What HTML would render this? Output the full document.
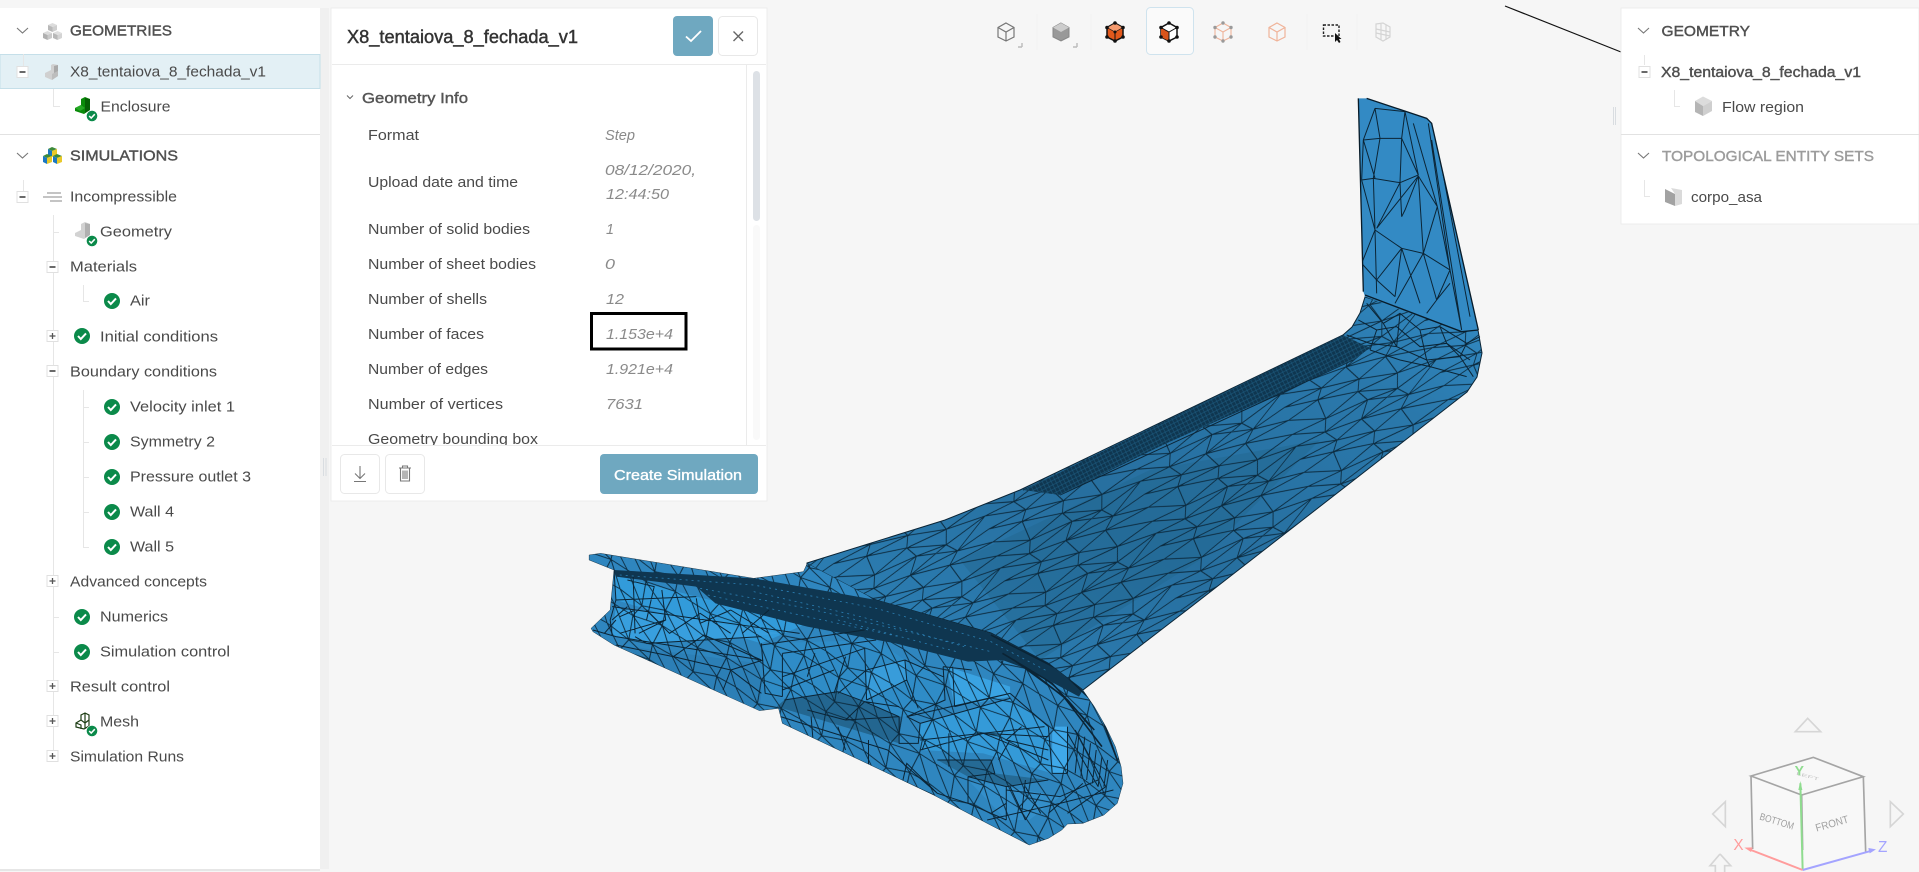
<!DOCTYPE html>
<html lang="en"><head><meta charset="utf-8"><title>X8_tentaiova_8_fechada_v1</title>
<style>
html,body{margin:0;padding:0;background:#f6f6f6;width:1919px;height:872px;overflow:hidden}
svg{display:block}
text{font-family:"Liberation Sans",sans-serif;font-size:14.5px;fill:#4a4a4a}
.h{fill:#505050;stroke:#505050;stroke-width:.4;font-size:14.5px}
.v{font-style:italic;fill:#8a8a8a}
.m{fill:none;stroke:#0b2435;stroke-width:1;vector-effect:non-scaling-stroke}
.t{stroke:#e6e6e6;stroke-width:1;fill:none}
</style></head><body>
<svg xmlns="http://www.w3.org/2000/svg" width="1919" height="872" viewBox="0 0 1919 872">
<defs>
<pattern id="wm" width="140" height="52" patternUnits="userSpaceOnUse" patternTransform="matrix(1 -.62 .3 1 0 0)">
<path d="M0,2L32,6L66,0L104,5L140,2M0,14L28,17L72,12L100,18L140,14M0,27L36,30L62,25L108,29L140,27M0,40L30,38L70,42L98,37L140,40M32,6L28,17M66,0L72,12M104,5L100,18M28,17L36,30M72,12L62,25M100,18L108,29M36,30L30,38M62,25L70,42M108,29L98,37M30,38L32,58M70,42L66,52M98,37L104,57M30,-14L32,6M70,-10L66,0M98,-15L104,5M0,2L28,17M32,6L72,12M66,0L100,18M104,5L140,14M0,14L36,30M28,17L62,25M100,18L62,25M72,12L108,29M140,14L108,29M0,27L30,38M36,30L70,42M62,25L98,37M108,29L140,40M0,40L32,58M30,38L66,52M70,42L104,57M98,37L140,54M0,-12L32,6M30,-14L66,0M70,-10L104,5M98,-15L140,2" fill="none" stroke="#0b2a3e" stroke-width=".85"/>
</pattern>
<pattern id="fm" width="60" height="34" patternUnits="userSpaceOnUse" patternTransform="matrix(2.8 1.6 -1 3 0 0)">
<path d="M0,3L22,8L42,2L60,3M0,18L18,20L44,16L60,18M22,8L18,20M42,2L44,16M0,3L18,20M22,8L44,16M42,2L60,18M18,20L22,42M44,16L42,36M0,18L22,42M18,20L42,36M44,16L60,37M18,-14L22,8M44,-18L42,2M0,-16L22,8M18,-14L42,2M44,-18L60,3" fill="none" stroke="#0b2a3e" stroke-width=".85"/>
</pattern>
<pattern id="fine" width="4" height="4" patternUnits="userSpaceOnUse" patternTransform="rotate(-27)">
<rect width="4" height="4" fill="#0f3650"/><path d="M0,2H4M2,0V4" stroke="#1f5f85" stroke-width=".5"/>
</pattern>
<linearGradient id="wg" x1="0" y1="1" x2="1" y2="0"><stop offset="0" stop-color="#2e84bb"/><stop offset=".45" stop-color="#276f9f"/><stop offset=".8" stop-color="#2a78ab"/><stop offset="1" stop-color="#338bc4"/></linearGradient>
<clipPath id="wc"><polygon points="807,563 945,520 1000,498 1020,490 1343,335 1352,327 1360,313 1365,297 1478,330 1482,353 1477,377 1467,392 1187,610 1170,623 1083,690 1048,663 991,633 876,600 807,570"/></clipPath>
<clipPath id="pc"><rect x="332" y="65" width="414" height="380"/></clipPath>
<clipPath id="wl"><polygon points="1075,25 1100,25 1280,85 1295,100 1435,720 1385,725 1095,620 1090,605"/></clipPath>
<polygon id="fp" points="50,105 80,100 480,175 610,155 620,130 800,240 1100,340 1250,430 1340,510 1370,560 1400,620 1425,680 1440,740 1445,790 1430,850 1395,885 1340,910 1300,912 1285,930 1250,955 1200,975 1090,910 950,825 555,610 545,565 495,572 115,375 60,335 55,325 105,270 115,150 50,120"/>
<clipPath id="fc"><use href="#fp"/></clipPath>
<g id="ok"><circle r="8" fill="#0b8a4a"/><path d="M-4,0L-1.2,3L4,-2.6" fill="none" stroke="#fff" stroke-width="2"/></g>
<g id="oks"><circle r="5.6" fill="#0b8a4a" stroke="#fff" stroke-width=".6"/><path d="M-2.8,0L-.8,2L2.8,-1.8" fill="none" stroke="#fff" stroke-width="1.5"/></g>
<g id="minus"><rect x="-5.5" y="-5.5" width="11" height="11" fill="#fff" stroke="#e0e0e0"/><path d="M-3,0H3" stroke="#444" stroke-width="1.6"/></g>
<g id="plus"><rect x="-5.5" y="-5.5" width="11" height="11" fill="#fff" stroke="#e0e0e0"/><path d="M-3,0H3M0,-3V3" stroke="#555" stroke-width="1.3"/></g>
</defs>

<rect width="1919" height="872" fill="#f6f6f6"/>

<!-- viewer line -->
<path d="M1505,6L1621,52" stroke="#111" stroke-width="1.2"/>

<!-- WING -->
<polygon points="807,563 945,520 1000,498 1020,490 1343,335 1352,327 1360,313 1365,297 1478,330 1482,353 1477,377 1467,392 1187,610 1170,623 1083,690 1048,663 991,633 876,600 807,570" fill="url(#wg)" stroke="#0b2435"/>
<g clip-path="url(#wc)">
<polygon points="960,560 1150,470 1320,440 1200,560 1040,660" fill="#22658f" opacity=".45"/>
<rect x="780" y="280" width="720" height="420" fill="url(#wm)"/>
<path d="M1023,490L1370,348M1060,495L1353,360" stroke="#0b2435"/>
</g>
<polygon points="1343,335 1370,348 1353,360 1283,392 1167,443 1060,495 1023,490" fill="url(#fine)"/>

<!-- winglet -->
<g transform="translate(1000 90) scale(.33333)">
<polygon points="1075,25 1100,25 1280,85 1295,100 1435,720 1385,725 1095,620 1090,605" fill="#338ac4"/>
<g clip-path="url(#wl)">
<path class="m" d="M1125,55L1090,150L1085,270M1125,55L1140,145L1090,150M1140,145L1205,145L1200,278L1120,265L1140,145M1205,145L1255,255L1200,278M1205,145L1215,65L1255,255M1215,65L1125,55M1120,265L1125,420M1085,270L1125,420M1200,278L1130,415M1255,258L1130,415M1200,278L1205,380M1255,258L1215,360L1205,380M1255,258L1270,490M1125,420L1205,475L1270,490M1125,420L1085,520M1125,420L1130,610M1205,475L1130,570M1205,475L1185,620M1270,490L1185,640M1270,490L1310,630M1270,490L1350,540L1310,630M1205,475L1260,640M1255,258L1312,350L1270,490M1312,350L1350,540M1240,100L1312,350M1285,100L1350,540M1310,150L1410,680M1295,150L1385,720M1350,540L1385,720M1310,630L1280,670M1350,580L1310,630M1085,520L1130,570M1090,150L1125,265M1085,270L1120,265M1130,570L1185,620"/>
</g>
<path d="M1095,615L1385,725L1435,720M1075,25L1090,605" fill="none" stroke="#081c2a" stroke-width="4"/>
<path d="M1100,25L1280,85L1295,100L1435,720" fill="none" stroke="#081c2a" stroke-width="4"/>
<g clip-path="url(#wc)"></g>
<path class="m" d="M1100,640L1150,700L1200,670L1260,720L1320,710L1400,760L1440,740M1075,690L1130,720L1190,710L1260,770L1340,760L1410,810M1040,735L1110,760L1190,770L1280,810L1380,800L1420,860M1130,720L1110,780M1200,670L1190,770M1260,720L1280,810M1320,710L1340,760L1380,800M1400,760L1380,800M1150,700L1190,770M1110,780L1200,810L1290,830L1400,860M1280,810L1290,830"/>
</g>

<!-- FUSELAGE -->
<g transform="translate(570 520) scale(.3827 .33333)">
<use href="#fp" fill="#2f86bf" stroke="#0b2435" stroke-width="1.2" vector-effect="non-scaling-stroke"/>
<g clip-path="url(#fc)">
<polygon points="115,165 330,230 620,310 500,370 120,240" fill="#329bda"/>
<polygon points="120,260 550,340 480,350 200,370 110,345" fill="#389fde"/>
<polygon points="120,375 495,430 500,520 495,572" fill="#2c7fb6"/>
<polygon points="540,560 860,670 865,590 770,545 700,515 560,540" fill="#236690"/>
<polygon points="505,370 800,360 875,420 975,470 975,540 880,590 860,590 770,545 700,515 555,535 510,520" fill="#2f8cc7"/>
<polygon points="775,450 875,420 880,480 775,540" fill="#389cda"/>
<polygon points="985,440 1150,500 1150,530 1005,560" fill="#3aa3e2"/>
<polygon points="915,610 1150,535 1250,620 1260,760 1080,700 915,690" fill="#349ad8"/>
<polygon points="1260,620 1300,620 1300,760 1260,760" fill="#3fa9ea"/>
<polygon points="960,720 1100,720 1110,760 1250,780 1140,800 1040,770" fill="#256a95"/>
<polygon points="1040,780 1140,800 1280,830 1200,900 1140,900" fill="#348fca"/>
<rect x="0" y="90" width="1460" height="900" fill="url(#fm)"/>
<!-- dense band -->
<polygon points="115,150 480,175 800,240 1100,340 1250,430 1340,510 1330,530 1200,450 1130,420 1040,425 850,370 620,320 380,250 330,200 120,170" fill="#0f3650"/>
<path d="M130,165L480,195L800,265L1100,365L1250,455M340,205L620,265L900,340L1100,395M360,225L640,295L860,350M480,215L760,290L1030,380M700,300L1010,395" fill="none" stroke="#2b7fb3" stroke-width=".8" vector-effect="non-scaling-stroke" stroke-dasharray="2 4"/>
<path d="M1100,345L1280,450L1380,560L1430,720M1130,400L1260,490L1370,630M1160,420L1290,530L1390,680M1200,450L1300,540L1360,620" fill="none" stroke="#0b2435" stroke-width="1.6" vector-effect="non-scaling-stroke"/>
<path class="m" d="M115,150L120,240L105,300L110,345M165,170L170,340M120,240L330,230M110,260L600,340M60,330L120,350L500,420M200,370L500,350M270,410L350,345L500,420M270,410L420,450L500,520M420,450L505,420M120,375L270,410M420,450L400,510M500,370L510,520L555,530M555,400L555,530M500,375L770,330M555,400L800,360M555,470L770,385M555,510L690,450M620,470L640,400M690,520L720,410M770,385L775,540M775,450L700,520M775,450L875,420M875,420L880,480L775,540M875,420L975,470M880,480L910,565M975,440L980,540L880,590M975,440L1050,450M1000,440L1005,560M1005,560L1150,520M880,590L1150,520M860,590L860,670L910,670L915,610L880,590M915,610L1150,535M915,660L1240,620M915,690L1080,640L1250,650M1080,640L1250,720M1150,520L1250,620M1250,620L1260,760M1300,620L1300,760M1260,760L1300,760M550,590L830,690M630,590L635,660M700,620L720,690M830,690L960,820M635,660L950,825M780,660L780,760M960,720L1100,720L1110,760L1040,770M1040,770L1140,800L1250,780M1040,770L1040,850M1140,800L1140,900M1090,900L1280,850M1140,810L1280,830L1380,780M1190,780L1180,880M1250,880L1340,790M200,270L260,340L340,280L420,340M150,180L220,200L200,300M240,210L250,300L130,340M150,260L110,300M250,300L180,340M330,235L340,310M420,270L520,340M420,270L340,310M520,270L450,340M90,340L120,300M170,350L200,370M130,290L170,270M860,560L770,545L700,515M700,515L560,540M720,600L770,545L860,590M620,570L720,600L860,590M1330,640L1320,760M1345,650L1335,770M1360,670L1350,780M1375,690L1365,790M1390,710L1380,800M1405,720L1395,800M1320,630L1400,800M1300,640L1380,800M1150,800L1190,900M1190,800L1230,880M1230,820L1190,900M1100,880L1140,850M1280,850L1420,810M1300,880L1400,800M960,820L1040,850L1140,900M870,780L880,730L960,820M930,660L920,690M990,640L990,740M1150,660L1120,720M1180,620L1140,660L1250,690"/>
</g>
</g>

<!-- LEFT PANEL -->
<rect x="320" y="8" width="9" height="861" fill="#f0f0f0"/>
<rect x="0" y="8" width="320" height="861" fill="#fff"/>
<rect x="0" y="869" width="320" height="2" fill="#e6e6e6"/>
<rect x="0" y="54.5" width="320" height="34" fill="#e3f0f5" stroke="#c5dfe9"/>
<path d="M0,134.5H320" stroke="#e2e2e2" stroke-width="1"/>
<path d="M323.5,458V476M326,458V476" stroke="#d9dde1"/>

<path class="t" d="M23.500,54V66M53.500,89V106.500H60M23.500,180V192M53.500,215V750M53.500,232.500H59M83.500,285V301.500H89M53.500,617.500H59M53.500,652.500H59M83.500,390V547.500H89M83.500,407.500H89M83.500,442.500H89M83.500,477.500H89M83.500,512.500H89"/>
<use href="#minus" x="22.5" y="72"/><use href="#minus" x="22.5" y="197"/><use href="#minus" x="52.5" y="267"/><use href="#plus" x="52.5" y="336"/><use href="#minus" x="52.5" y="371"/><use href="#plus" x="52.5" y="581"/><use href="#plus" x="52.5" y="686"/><use href="#plus" x="52.5" y="721"/><use href="#plus" x="52.5" y="756"/>

<path d="M17,28L22.5,33L28,28M17,153L22.5,158L28,153" fill="none" stroke="#777" stroke-width="1.1"/>
<!-- geometries icon -->
<g><polygon points="48,25 52.500,23 57,25 52.500,27" fill="#dcdcdc"/><polygon points="48,25 52.500,27 52.500,32 48,30" fill="#b8b8b8"/><polygon points="52.500,27 57,25 57,30 52.500,32" fill="#cfcfcf"/>
<polygon points="43,33 47.500,31 52,33 47.500,35" fill="#dcdcdc"/><polygon points="43,33 47.500,35 47.500,40 43,38" fill="#b0b0b0"/><polygon points="47.500,35 52,33 52,38 47.500,40" fill="#cacaca"/>
<polygon points="53,33 57.500,31 62,33 57.500,35" fill="#e0e0e0"/><polygon points="53,33 57.500,35 57.500,40 53,38" fill="#b8b8b8"/><polygon points="57.500,35 62,33 62,38 57.500,40" fill="#d4d4d4"/></g>
<!-- simulations icon -->
<g><polygon points="48,149 52,147 57,149 52,151" fill="#3d8a3a"/><polygon points="48,149 52,151 52,157 48,155" fill="#1a78c2"/><polygon points="52,151 57,149 57,155 52,157" fill="#e9c92a"/><polygon points="43,156 47,154 52,156 47,158" fill="#3d8a3a"/><polygon points="43,156 47,158 47,164 43,162" fill="#1a78c2"/><polygon points="47,158 52,156 52,162 47,164" fill="#e9c92a"/><polygon points="53,156 57,154 62,156 57,158" fill="#3d8a3a"/><polygon points="53,156 57,158 57,164 53,162" fill="#1a78c2"/><polygon points="57,158 62,156 62,162 57,164" fill="#e9c92a"/></g>
<!-- row icons -->
<g><polygon points="45,73 51,70 51,65 53,64 58,65 58,76 52,80 45,77" fill="#d0d0d0"/><polygon points="52,74 58,71 58,76 52,80" fill="#bdbdbd"/><polygon points="54,66 58,65 58,71 54,73" fill="#a9a9a9"/></g>
<g><polygon points="75,108 81,105 81,99 85,97 90,99 90,110 84,114 75,111" fill="#0a8a0a"/><polygon points="85,98 90,99 90,110 85,113" fill="#056005"/><polygon points="75,108 81,105 85,108 80,111" fill="#25a825"/></g>
<use href="#oks" x="92" y="116"/>
<g><polygon points="75,233 81,230 81,224 85,222 90,224 90,235 84,239 75,236" fill="#d2d2d2"/><polygon points="85,223 90,224 90,235 85,238" fill="#b0b0b0"/></g>
<use href="#oks" x="92" y="241"/>
<path d="M47,193H61M43,197H62M50,201H62" stroke="#8a8a8a" stroke-width="1" fill="none"/>
<use href="#ok" x="112" y="301"/><use href="#ok" x="82" y="336"/><use href="#ok" x="112" y="407"/><use href="#ok" x="112" y="442"/><use href="#ok" x="112" y="477"/><use href="#ok" x="112" y="512"/><use href="#ok" x="112" y="547"/><use href="#ok" x="82" y="617"/><use href="#ok" x="82" y="652"/>
<path d="M76,723L81,720V715L85,713L89,715V726L84,729L76,727ZM81,720L85,723V729M85,713V723L89,720M76,723L81,725V729" fill="none" stroke="#1d3d14" stroke-width="1.2"/>
<use href="#oks" x="92" y="731"/>

<g transform="translate(0 -.6)">
<text class="h" x="70" y="36" textLength="102" lengthAdjust="spacingAndGlyphs">GEOMETRIES</text>
<text x="70" y="77" textLength="196" lengthAdjust="spacingAndGlyphs">X8_tentaiova_8_fechada_v1</text>
<text x="100.5" y="112" textLength="70" lengthAdjust="spacingAndGlyphs">Enclosure</text>
<text class="h" x="70" y="161" textLength="108" lengthAdjust="spacingAndGlyphs">SIMULATIONS</text>
<text x="70" y="202" textLength="107" lengthAdjust="spacingAndGlyphs">Incompressible</text>
<text x="100" y="237" textLength="72" lengthAdjust="spacingAndGlyphs">Geometry</text>
<text x="70" y="272" textLength="67" lengthAdjust="spacingAndGlyphs">Materials</text>
<text x="130" y="306" textLength="20" lengthAdjust="spacingAndGlyphs">Air</text>
<text x="100" y="342" textLength="118" lengthAdjust="spacingAndGlyphs">Initial conditions</text>
<text x="70" y="377" textLength="147" lengthAdjust="spacingAndGlyphs">Boundary conditions</text>
<text x="130" y="412" textLength="105" lengthAdjust="spacingAndGlyphs">Velocity inlet 1</text>
<text x="130" y="447" textLength="85" lengthAdjust="spacingAndGlyphs">Symmetry 2</text>
<text x="130" y="482" textLength="121" lengthAdjust="spacingAndGlyphs">Pressure outlet 3</text>
<text x="130" y="517" textLength="44" lengthAdjust="spacingAndGlyphs">Wall 4</text>
<text x="130" y="552" textLength="44" lengthAdjust="spacingAndGlyphs">Wall 5</text>
<text x="70" y="587" textLength="137" lengthAdjust="spacingAndGlyphs">Advanced concepts</text>
<text x="100" y="622" textLength="68" lengthAdjust="spacingAndGlyphs">Numerics</text>
<text x="100" y="657" textLength="130" lengthAdjust="spacingAndGlyphs">Simulation control</text>
<text x="70" y="692" textLength="100" lengthAdjust="spacingAndGlyphs">Result control</text>
<text x="100" y="727" textLength="39" lengthAdjust="spacingAndGlyphs">Mesh</text>
<text x="70" y="762" textLength="114" lengthAdjust="spacingAndGlyphs">Simulation Runs</text>
</g>

<!-- CENTER PANEL -->
<rect x="331" y="8" width="436" height="493" fill="#fff" stroke="#ececec"/>
<path d="M332,64.500H766M332,445.500H766M746.500,65V445" stroke="#ebebeb"/>
<text x="347" y="43" textLength="231" lengthAdjust="spacingAndGlyphs" style="font-size:18.5px;fill:#333;stroke:#333;stroke-width:.45">X8_tentaiova_8_fechada_v1</text>
<rect x="673" y="16" width="40" height="40" rx="4" fill="#6fa8c0"/>
<path d="M686,36.500L691,41L701,31" fill="none" stroke="#fff" stroke-width="1.8"/>
<rect x="718.500" y="16.500" width="39" height="39" rx="4" fill="#fff" stroke="#e8e8e8"/>
<path d="M733.500,31.500L743,41M743,31.500L733.500,41" stroke="#666" stroke-width="1.4"/>
<rect x="753" y="71" width="7" height="150" rx="3.500" fill="#dde1e6"/>
<rect x="753" y="225" width="7" height="215" rx="3.500" fill="#f9f9f9"/>
<path d="M347,95.500L350,98.500L353,95.500" fill="none" stroke="#666"/>
<text x="362" y="103" textLength="106" lengthAdjust="spacingAndGlyphs" style="fill:#555;stroke:#555;stroke-width:.4">Geometry Info</text>
<g clip-path="url(#pc)">
<g transform="translate(0 -1)">
<text x="368" y="141" textLength="51" lengthAdjust="spacingAndGlyphs">Format</text>
<text x="368" y="188" textLength="150" lengthAdjust="spacingAndGlyphs">Upload date and time</text>
<text x="368" y="235" textLength="162" lengthAdjust="spacingAndGlyphs">Number of solid bodies</text>
<text x="368" y="270" textLength="168" lengthAdjust="spacingAndGlyphs">Number of sheet bodies</text>
<text x="368" y="305" textLength="119" lengthAdjust="spacingAndGlyphs">Number of shells</text>
<text x="368" y="340" textLength="116" lengthAdjust="spacingAndGlyphs">Number of faces</text>
<text x="368" y="375" textLength="120" lengthAdjust="spacingAndGlyphs">Number of edges</text>
<text x="368" y="410" textLength="135" lengthAdjust="spacingAndGlyphs">Number of vertices</text>
<text x="368" y="445" textLength="170" lengthAdjust="spacingAndGlyphs">Geometry bounding box</text>
<text class="v" x="605" y="141" textLength="30" lengthAdjust="spacingAndGlyphs">Step</text>
<text class="v" x="605" y="176" textLength="91" lengthAdjust="spacingAndGlyphs">08/12/2020,</text>
<text class="v" x="606" y="200" textLength="63" lengthAdjust="spacingAndGlyphs">12:44:50</text>
<text class="v" x="606" y="235" textLength="8" lengthAdjust="spacingAndGlyphs">1</text>
<text class="v" x="605" y="270" textLength="10" lengthAdjust="spacingAndGlyphs">0</text>
<text class="v" x="606" y="305" textLength="18" lengthAdjust="spacingAndGlyphs">12</text>
<text class="v" x="606" y="340" textLength="67" lengthAdjust="spacingAndGlyphs">1.153e+4</text>
<text class="v" x="606" y="375" textLength="67" lengthAdjust="spacingAndGlyphs">1.921e+4</text>
<text class="v" x="606" y="410" textLength="37" lengthAdjust="spacingAndGlyphs">7631</text>
</g>
</g>
<rect x="591.500" y="313.500" width="94.500" height="35.500" fill="none" stroke="#000" stroke-width="3"/>
<rect x="340.500" y="454.500" width="39" height="39" rx="4" fill="#fff" stroke="#e8e8e8"/>
<rect x="385.500" y="454.500" width="39" height="39" rx="4" fill="#fff" stroke="#e8e8e8"/>
<path d="M360,466V478M355,473.500L360,478.500L365,473.500M354,481.500H366" fill="none" stroke="#777" stroke-width="1.1"/>
<path d="M399,468H411M402.500,468V466H407.500V468M400.500,468V481H409.500V468M403,470.500V479M405,470.500V479M407,470.500V479" fill="none" stroke="#777" stroke-width="1.1"/>
<rect x="600" y="454" width="158" height="40" rx="4" fill="#6fa8c0"/>
<text x="614" y="480" textLength="128" lengthAdjust="spacingAndGlyphs" style="fill:#fff;stroke:#fff;stroke-width:.35">Create Simulation</text>

<!-- TOOLBAR -->
<path d="M1037,14V50M1091,14V50M1307,14V50M1357,14V50" stroke="#f1f1f1"/>
<rect x="1146.500" y="7.500" width="47" height="47" rx="4" fill="#fafafa" stroke="#cfe3ee"/>
<g fill="none" stroke="#777" stroke-width="1.2">
<path d="M1006,23L1014,27.500V37L1006,41L998,37V27.500ZM998,27.500L1006,32L1014,27.500M1006,32V41"/>
</g>
<path d="M1022,47H1018M1022,47V43M1077,47H1073M1077,47V43" stroke="#bbb" stroke-width="1.4" fill="none"/>
<polygon points="1061,23 1069,27.500 1069,37 1061,41 1053,37 1053,27.500" fill="#999" stroke="#888"/>
<polygon points="1061,23 1069,27.500 1061,32 1053,27.500" fill="#ccc"/>
<polygon points="1115,23 1123,27.500 1123,37 1115,41 1107,37 1107,27.500" fill="#e2591c" stroke="#111" stroke-width="1.5"/>
<polygon points="1115,23 1123,27.500 1115,32 1107,27.500" fill="#f59a6e" stroke="#111" stroke-width=".6"/>
<path d="M1115,32V41" stroke="#111"/>
<g fill="#111"><circle cx="1115" cy="23" r="1.800"/><circle cx="1123" cy="27.500" r="1.800"/><circle cx="1123" cy="37" r="1.800"/><circle cx="1115" cy="41" r="1.800"/><circle cx="1107" cy="37" r="1.800"/><circle cx="1107" cy="27.500" r="1.800"/><circle cx="1115" cy="32" r="1.500"/></g>
<polygon points="1169,23 1177,27.500 1177,37 1169,41 1161,37 1161,27.500" fill="#fff" stroke="#111" stroke-width="1.5"/>
<polygon points="1161,27.500 1169,32 1169,41 1161,37" fill="#d9541a"/>
<path d="M1161,27.500L1169,32L1177,27.500M1169,32V41" stroke="#111" fill="none"/>
<g fill="#111"><circle cx="1169" cy="23" r="1.800"/><circle cx="1177" cy="27.500" r="1.800"/><circle cx="1177" cy="37" r="1.800"/><circle cx="1169" cy="41" r="1.800"/><circle cx="1161" cy="37" r="1.800"/><circle cx="1161" cy="27.500" r="1.800"/></g>
<path d="M1223,23L1231,27.500V37L1223,41L1215,37V27.500ZM1215,27.500L1223,32L1231,27.500M1223,32V41" fill="none" stroke="#f0b49a" stroke-width="1.1"/>
<g fill="#9a9a9a"><circle cx="1223" cy="23" r="1.700"/><circle cx="1231" cy="27.500" r="1.700"/><circle cx="1231" cy="37" r="1.700"/><circle cx="1223" cy="41" r="1.700"/><circle cx="1215" cy="37" r="1.700"/><circle cx="1215" cy="27.500" r="1.700"/></g>
<path d="M1277,23L1285,27.500V37L1277,41L1269,37V27.500ZM1269,27.500L1277,32L1285,27.500M1277,32V41" fill="none" stroke="#f0b49a" stroke-width="1.200"/>
<rect x="1323.500" y="25" width="15.500" height="11" fill="none" stroke="#222" stroke-width="1.400" stroke-dasharray="2.500 1.500"/>
<polygon points="1335,33 1335,42 1337,40 1339,43 1340.500,42 1339,39 1341.500,39" fill="#111"/>
<g fill="none" stroke="#d4d4d4" stroke-width="1.200"><path d="M1376,24L1383,23L1390,27V37L1383,41L1376,37ZM1376,29L1390,32M1376,33L1390,36M1381,24V40M1386,25V40"/></g>

<!-- RIGHT PANEL -->
<rect x="1621" y="8" width="298" height="216" fill="#fff" stroke="#ececec"/>
<path d="M1621,134.500H1919" stroke="#e2e2e2"/>
<path d="M1613.500,107V125M1615.500,107V125" stroke="#d9dde1"/>
<path d="M1638,28L1643.500,33L1649,28M1638,153L1643.500,158L1649,153" fill="none" stroke="#777" stroke-width="1.100"/>
<path class="t" d="M1644.500,55V65M1674.500,90V106.500H1680M1644.500,180V196.500H1650"/>
<use href="#minus" x="1644.500" y="72"/>
<polygon points="1703,96.500 1712,101 1703,106 1695,101" fill="#dcdcdc"/>
<polygon points="1695,101 1703,106 1703,116 1695,112" fill="#b5b5b5"/>
<polygon points="1703,106 1712,101 1712,111 1703,116" fill="#cfcfcf"/>
<polygon points="1665,189 1675,194 1675,206 1665,202" fill="#a2a2a2"/>
<polygon points="1671,188 1682,190 1682,204 1675,206 1675,194" fill="#dadada"/>
<text class="h" x="1661.500" y="36" textLength="88.500" lengthAdjust="spacingAndGlyphs">GEOMETRY</text>
<text class="h" x="1661" y="77" textLength="200" lengthAdjust="spacingAndGlyphs">X8_tentaiova_8_fechada_v1</text>
<text x="1722" y="112" textLength="82" lengthAdjust="spacingAndGlyphs">Flow region</text>
<text class="h" x="1662" y="161" textLength="212" lengthAdjust="spacingAndGlyphs" style="fill:#9c9c9c;stroke:#9c9c9c">TOPOLOGICAL ENTITY SETS</text>
<text x="1691" y="202" textLength="71" lengthAdjust="spacingAndGlyphs">corpo_asa</text>

<!-- GIZMO -->
<g transform="translate(1690 700) scale(.33333)">
<polygon points="183,228 370,172 520,230 527,455 338,510 188,447" fill="#f8f8f8"/>
<path d="M183,228L370,172L520,230L335,285ZM183,228L188,447M520,230L527,455M335,285L338,450" fill="none" stroke="#a5a5a5" stroke-width="5"/>
<polygon points="353,55 392,95 316,95" fill="none" stroke="#d6d6d6" stroke-width="5"/>
<polygon points="106,305 106,380 68,342" fill="none" stroke="#d6d6d6" stroke-width="5"/>
<polygon points="601,305 601,380 640,342" fill="none" stroke="#d6d6d6" stroke-width="5"/>
<path d="M90,462L122,497H104V516M76,516V497H60L90,462" fill="none" stroke="#d6d6d6" stroke-width="5"/>
<path d="M338,510L331,250" stroke="#8fdc8f" stroke-width="6" fill="none"/><polygon points="331,243 325,270 337,270" fill="#8fdc8f"/>
<path d="M338,510L175,447" stroke="#ff9c9c" stroke-width="6" fill="none"/><polygon points="163,443 188,442 183,456" fill="#ff9c9c"/>
<path d="M338,510L545,452" stroke="#a4a4ff" stroke-width="6" fill="none"/><polygon points="558,448 535,444 539,460" fill="#a4a4ff"/>
<text x="0" y="0" transform="translate(314 226)" style="font-size:42px;fill:#8fdc8f;font-weight:bold">Y</text>
<text x="0" y="0" transform="translate(130 450)" style="font-size:46px;fill:#ff9c9c">X</text>
<text x="0" y="0" transform="translate(564 456)" style="font-size:46px;fill:#a4a4ff">Z</text>
<text x="0" y="0" transform="translate(207 358) rotate(17)" textLength="106" lengthAdjust="spacingAndGlyphs" style="font-size:30px;fill:#a0a0a0">BOTTOM</text>
<text x="0" y="0" transform="translate(380 395) rotate(-16)" textLength="102" lengthAdjust="spacingAndGlyphs" style="font-size:32px;fill:#a0a0a0">FRONT</text>
<text x="0" y="0" transform="translate(318 224) rotate(15) scale(1 .5)" textLength="70" lengthAdjust="spacingAndGlyphs" style="font-size:26px;fill:#c4c4c4">LEFT</text>
</g>
</svg>
</body></html>
